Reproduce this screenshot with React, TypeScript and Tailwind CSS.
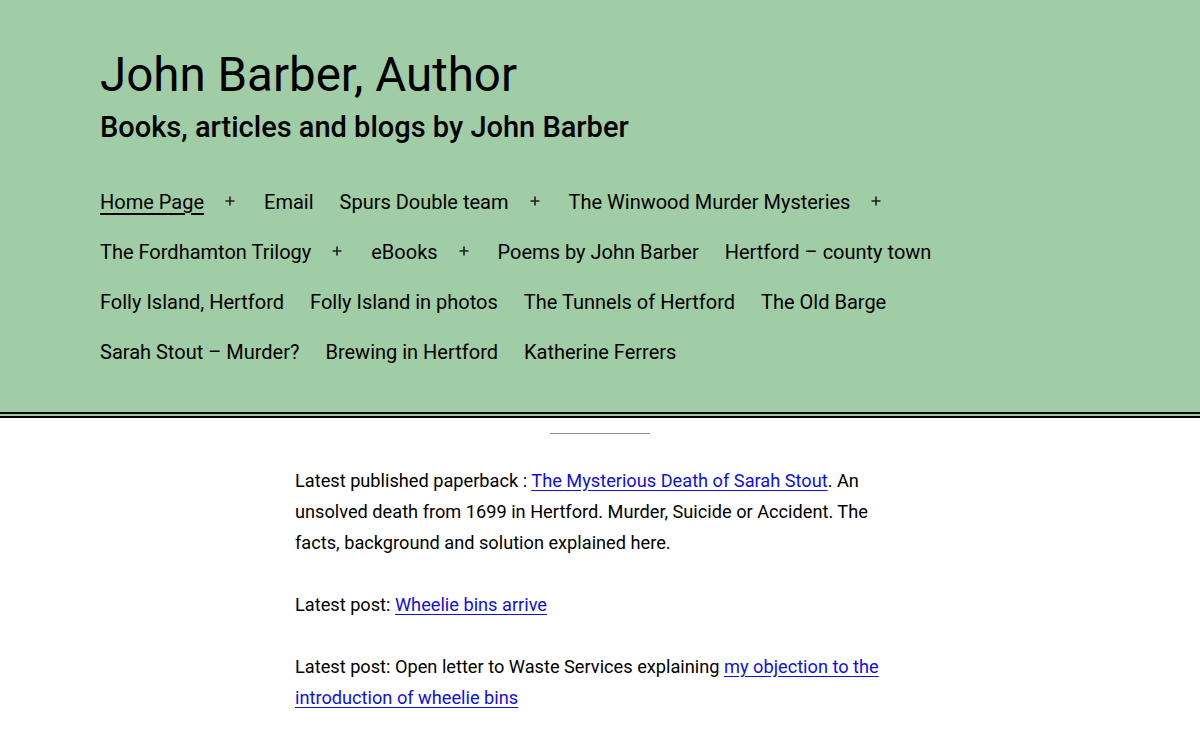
import React from "react";

type Item = { label: string; sub?: boolean; current?: boolean };

const items: Item[] = [
  { label: "Home Page", sub: true, current: true },
  { label: "Email" },
  { label: "Spurs Double team", sub: true },
  { label: "The Winwood Murder Mysteries", sub: true },
  { label: "The Fordhamton Trilogy", sub: true },
  { label: "eBooks", sub: true },
  { label: "Poems by John Barber" },
  { label: "Hertford – county town" },
  { label: "Folly Island, Hertford" },
  { label: "Folly Island in photos" },
  { label: "The Tunnels of Hertford" },
  { label: "The Old Barge" },
  { label: "Sarah Stout – Murder?" },
  { label: "Brewing in Hertford" },
  { label: "Katherine Ferrers" },
];

function Plus() {
  return (
    <span className="ml-[21px] mr-[3px] inline-flex w-[10px] items-center justify-center">
      <svg width="10" height="10" viewBox="0 0 10 10" className="mt-[-2px]">
        <path d="M5 0.5V9.5M0.5 5H9.5" stroke="#1f1f1f" strokeWidth="1.6" fill="none" />
      </svg>
    </span>
  );
}

export default function App() {
  return (
    <div className="min-h-[740px] bg-white text-black" style={{ fontFamily: "Roboto, 'Liberation Sans', sans-serif" }}>
      <header className="border-b-[6px] border-double border-black bg-[#a0cca6] px-[100px] pb-[35px] pt-[47px]">
        <h1 className="text-[47.5px] font-normal leading-[57.6px]">John Barber, Author</h1>
        <p className="mt-[4px] text-[29px] font-medium leading-[36px]">Books, articles and blogs by John Barber</p>
        <nav className="mt-[32px] w-[900px]">
          <ul className="flex flex-wrap gap-x-[26px] text-[20px] leading-[50px]">
            {items.map((it) => (
              <li key={it.label} className="flex items-center">
                <a
                  href="#"
                  className={
                    it.current
                      ? "underline decoration-[1.5px] underline-offset-[4px]"
                      : "no-underline"
                  }
                >
                  {it.label}
                </a>
                {it.sub ? <Plus /> : null}
              </li>
            ))}
          </ul>
        </nav>
      </header>
      <div className="mx-auto mt-[15px] h-px w-[100px] bg-[#8c8c8c]" />
      <main className="mx-auto mt-[31px] w-[610px] text-[18.2px] leading-[31px]">
        <p>
          Latest published paperback :{" "}
          <a href="#" className="text-[#1010dd] underline underline-offset-[3px]">
            The Mysterious Death of Sarah Stout
          </a>
          . An unsolved death from 1699 in Hertford. Murder, Suicide or Accident. The facts, background and
          solution explained here.
        </p>
        <p className="mt-[31px]">
          Latest post:{" "}
          <a href="#" className="text-[#1010dd] underline underline-offset-[3px]">
            Wheelie bins arrive
          </a>
        </p>
        <p className="mt-[31px]">
          Latest post: Open letter to Waste Services explaining{" "}
          <a href="#" className="text-[#1010dd] underline underline-offset-[3px]">
            my objection to the introduction of wheelie bins
          </a>
        </p>
      </main>
    </div>
  );
}
